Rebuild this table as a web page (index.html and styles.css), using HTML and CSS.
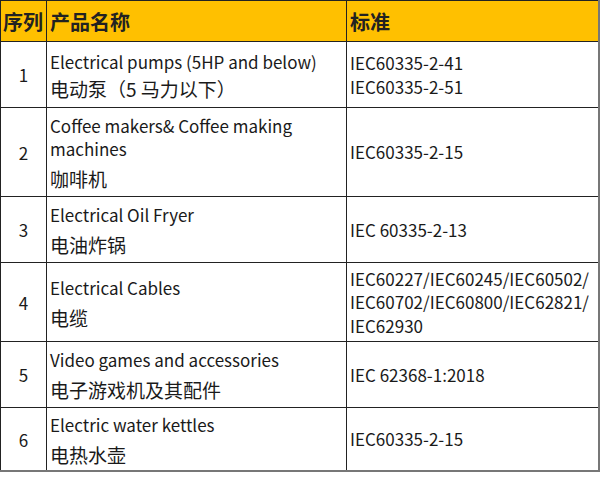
FILE: index.html
```html
<!DOCTYPE html>
<html lang="zh">
<head>
<meta charset="utf-8">
<link rel="stylesheet" href="styles.css">
</head>
<body>
<table class="tbl">
  <colgroup>
    <col class="c-no"><col class="c-name"><col class="c-std">
  </colgroup>
  <thead>
    <tr class="head">
      <th class="no">序列</th>
      <th>产品名称</th>
      <th>标准</th>
    </tr>
  </thead>
  <tbody>
    <tr class="r1">
      <td class="no">1</td>
      <td><div class="en">Electrical pumps (5HP and below)</div><div class="zh zh-tight">电动泵（5 马力以下）</div></td>
      <td><div class="std">IEC60335-2-41<br>IEC60335-2-51</div></td>
    </tr>
    <tr class="r2">
      <td class="no">2</td>
      <td><div class="en">Coffee makers&amp; Coffee making machines</div><div class="zh">咖啡机</div></td>
      <td><div class="std">IEC60335-2-15</div></td>
    </tr>
    <tr class="r3">
      <td class="no">3</td>
      <td><div class="en">Electrical Oil Fryer</div><div class="zh">电油炸锅</div></td>
      <td><div class="std">IEC 60335-2-13</div></td>
    </tr>
    <tr class="r4">
      <td class="no">4</td>
      <td><div class="en">Electrical Cables</div><div class="zh">电缆</div></td>
      <td><div class="std">IEC60227/IEC60245/IEC60502/<br>IEC60702/IEC60800/IEC62821/<br>IEC62930</div></td>
    </tr>
    <tr class="r5">
      <td class="no">5</td>
      <td><div class="en">Video games and accessories</div><div class="zh">电子游戏机及其配件</div></td>
      <td><div class="std">IEC 62368-1:2018</div></td>
    </tr>
    <tr class="r6 last">
      <td class="no">6</td>
      <td><div class="en">Electric water kettles</div><div class="zh">电热水壶</div></td>
      <td><div class="std">IEC60335-2-15</div></td>
    </tr>
  </tbody>
</table>
</body>
</html>
```

FILE: styles.css
```css
html, body {
  margin: 0;
  padding: 0;
  background: #ffffff;
}
body {
  font-family: "Noto Sans CJK SC", "Noto Sans", sans-serif;
  color: #1a1a1a;
}
.tbl {
  border-collapse: collapse;
  table-layout: fixed;
  width: 598px;
  border-top: 1px solid #333;
  border-left: 1px solid #222;
  border-right: 2px solid #777;
  border-bottom: 2px solid #777;
}
.c-no { width: 46px; }
.c-name { width: 300px; }
.c-std { width: 252px; }
th, td {
  border: 1px solid #222;
  padding: 0 0 0 3px;
  vertical-align: middle;
  text-align: left;
  font-size: 17px;
  font-weight: 400;
}
.tbl tr:last-child td { border-bottom: 2px solid #777; }
.tbl td:last-child, .tbl th:last-child { border-right: 2px solid #777; }
.head th {
  background: #ffc000;
  height: 40px;
  font-size: 20px;
  font-weight: 700;
  color: #222;
  padding-left: 3px;
}
.head th.no { padding-left: 2px; }
td.no {
  text-align: center;
  padding: 0;
}
.en {
  line-height: 23px;
}
.zh {
  font-size: 19px;
  line-height: 23px;
  margin-top: 7px;
}
.zh-tight { margin-top: 4px; }
.std {
  line-height: 23.5px;
}
.r1 td { height: 65px; }
.r2 td { height: 88px; }
.r3 td { height: 65px; }
.r4 td { height: 78px; }
.r5 td { height: 65px; }
.r6 td { height: 62px; }
```
